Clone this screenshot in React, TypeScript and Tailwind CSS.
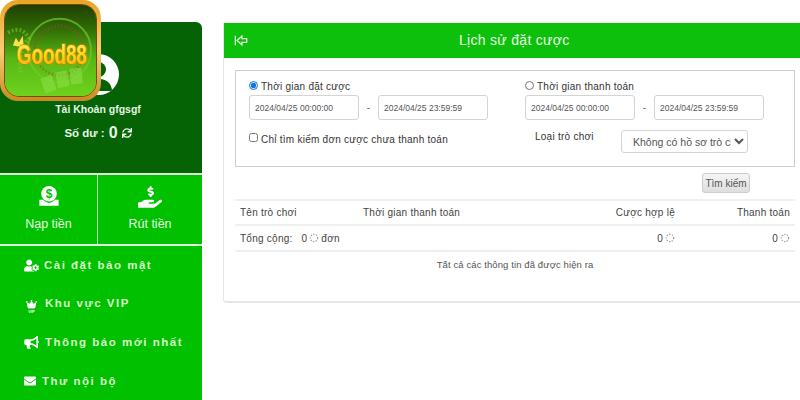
import React from 'react';
import { FaBullhorn, FaEnvelope, FaHandHoldingUsd, FaSync, FaUserCog } from 'react-icons/fa';
import { FaCrown } from 'react-icons/fa6';

const Spinner: React.FC = () => (
  <svg viewBox="0 0 12 12" className="w-[10px] h-[10px] inline-block">
    <circle cx="6" cy="6" r="4.4" fill="none" stroke="#9a9a9a" strokeWidth="1.4" strokeDasharray="1.6 1.6" />
  </svg>
);

const Logo: React.FC = () => (
  <div className="absolute left-0 top-0 w-[101px] h-[101px] rounded-[18px] bg-gradient-to-b from-[#e9a423] via-[#f8cf6f] to-[#c98a1c] p-[4px]">
    <div className="w-full h-full rounded-[15px] overflow-hidden border border-[#7a4a08]">
      <svg viewBox="0 0 92 92" className="w-full h-full block">
        <defs>
          <linearGradient id="logoBg" x1="0" y1="0" x2="0" y2="1">
            <stop offset="0" stopColor="#1f3f02" />
            <stop offset="0.25" stopColor="#2f6a05" />
            <stop offset="0.6" stopColor="#58b814" />
            <stop offset="1" stopColor="#6fd21e" />
          </linearGradient>
          <linearGradient id="logoText" x1="0" y1="0" x2="0" y2="1">
            <stop offset="0" stopColor="#fff26a" />
            <stop offset="0.55" stopColor="#ffd314" />
            <stop offset="1" stopColor="#ff9d0a" />
          </linearGradient>
        </defs>
        <rect width="92" height="92" fill="url(#logoBg)" />
        <circle cx="55" cy="46" r="32" fill="none" stroke="#78c82c" strokeWidth="2" opacity="0.7" />
        <circle cx="55" cy="46" r="25" fill="none" stroke="#a04c2c" strokeWidth="3" strokeDasharray="1.5 2" opacity="0.5" />
        <path d="M3 28 Q18 20 24 34 Q12 46 16 70" fill="none" stroke="#79cf35" strokeWidth="4" strokeDasharray="2 2" opacity="0.55" />
        <g fill="#8fe04a" opacity="0.55">
          <rect x="38" y="72" width="12" height="16" rx="1" transform="rotate(-20 44 80)" />
          <rect x="52" y="67" width="12" height="16" rx="1" transform="rotate(-12 58 75)" />
          <rect x="66" y="64" width="12" height="16" rx="1" transform="rotate(-6 72 72)" />
        </g>
        <path d="M8 41 L11 33 L14 38 L18 31 L19 43 Z" fill="#ffe14a" />
        <text transform="translate(12 60) scale(1 1.45)" fontFamily="'Liberation Sans', sans-serif" fontWeight="700" fontSize="19" fill="url(#logoText)" stroke="#d87c00" strokeWidth="1.1" paintOrder="stroke">Good88</text>
      </svg>
    </div>
  </div>
);

const Sidebar: React.FC = () => (
  <aside className="w-[202px] shrink-0 mt-[22px]">
    <div className="h-[151px] bg-[#056305] rounded-t-[6px] flex flex-col items-center">
      <div className="mt-[32px] mr-[6px] w-[41px] h-[41px] rounded-full bg-white overflow-hidden flex flex-col items-center pt-[8px]">
        <div className="w-[15px] h-[15px] rounded-full bg-[#056305]" />
        <div className="mt-[2px] w-[28px] h-[12px] rounded-t-full bg-[#056305]" />
      </div>
      <p className="mt-[7px] mr-[6px] text-[10.5px] leading-[14px] font-bold text-[#e4f3e4]">Tài Khoản gfgsgf</p>
      <p className="mt-[7px] mr-[6px] flex items-center gap-[4px] text-[11.5px] leading-[20px] font-bold text-[#e8f5e8]">
        Số dư : <span className="text-[16px]">0</span>
        <FaSync className="w-[10px] h-[10px]" />
      </p>
    </div>
    <div className="h-[2px] bg-[#dff3df]" />
    <div className="h-[69px] bg-[#00c000] flex text-[#e6fbe0] text-[12.5px]">
      <div className="w-[98px] flex flex-col items-center pt-[10px] border-r border-[#bfeebf]">
        <svg viewBox="0 0 24 24" className="w-[22px] h-[22px] fill-white">
          <circle cx="12" cy="9.5" r="8.5" />
          <path d="M1.5 16 H5.5 Q12 23 18.5 16 H22.5 V22.5 H1.5 Z" />
          <text x="12" y="14" textAnchor="middle" fontSize="13" fontWeight="700" fontFamily="'Liberation Sans', sans-serif" fill="#00c000">$</text>
        </svg>
        <span className="mt-[8px] leading-[18px]">Nạp tiền</span>
      </div>
      <div className="flex-1 flex flex-col items-center pt-[10px]">
        <FaHandHoldingUsd className="w-[24px] h-[24px] text-white" />
        <span className="mt-[6px] leading-[18px]">Rút tiền</span>
      </div>
    </div>
    <div className="h-[2px] bg-[#dff3df]" />
    <nav className="h-[160px] bg-[#00c000] pl-[24px] pt-[11px] text-[11.5px] font-bold tracking-[1.5px] text-[#d8f7c8]">
      <div className="h-[38px] flex items-start gap-[5px]">
        <FaUserCog className="w-[15px] h-[13px] text-white mt-[2px]" />
        <span className="leading-[17px]">Cài đặt bảo mật</span>
      </div>
      <div className="h-[39px] flex items-start gap-[6px]">
        <span className="w-[15px] flex flex-col items-center mt-[4px] text-white">
          <FaCrown className="w-[15px] h-[10px]" />
          <span className="text-[4px] leading-[5px] tracking-normal">VIP</span>
        </span>
        <span className="leading-[17px]">Khu vực VIP</span>
      </div>
      <div className="h-[39px] flex items-start gap-[6px]">
        <FaBullhorn className="w-[15px] h-[13px] text-white mt-[2px]" />
        <span className="leading-[17px]">Thông báo mới nhất</span>
      </div>
      <div className="h-[39px] flex items-start gap-[6px]">
        <FaEnvelope className="w-[12px] h-[12px] text-white mt-[2px]" />
        <span className="leading-[17px]">Thư nội bộ</span>
      </div>
    </nav>
  </aside>
);

const DateRange: React.FC = () => (
  <div className="flex items-center">
    <input readOnly value="2024/04/25 00:00:00" className="w-[110px] h-[25px] px-[5px] bg-white border border-[#d4d4d4] rounded-[3px] text-[8.5px] tracking-normal font-normal text-[#555]" />
    <span className="w-[19px] text-center text-[10px] text-[#666]">-</span>
    <input readOnly value="2024/04/25 23:59:59" className="w-[110px] h-[25px] px-[5px] bg-white border border-[#d4d4d4] rounded-[3px] text-[8.5px] tracking-normal font-normal text-[#555]" />
  </div>
);

const FilterBox: React.FC = () => (
  <div className="h-[97px] border border-[#cfcfcf] flex pl-[13px] pt-[8px] text-[10px] tracking-[0.25px] font-medium text-[#333]">
    <div className="w-[276px]">
      <label className="h-[15px] flex items-center gap-[3px]">
        <input type="radio" name="timeType" defaultChecked className="w-[9px] h-[9px] m-0 -mt-[3px] accent-[#0b76e0]" />
        <span>Thời gian đặt cược</span>
      </label>
      <div className="mt-[1px]">
        <DateRange />
      </div>
      <label className="mt-[12px] h-[14px] flex items-center gap-[3px]">
        <input type="checkbox" className="w-[9px] h-[9px] m-0 -mt-[3px]" />
        <span>Chỉ tìm kiếm đơn cược chưa thanh toán</span>
      </label>
    </div>
    <div>
      <label className="h-[15px] flex items-center gap-[3px]">
        <input type="radio" name="timeType" className="w-[9px] h-[9px] m-0 -mt-[3px] accent-[#0b76e0]" />
        <span>Thời gian thanh toán</span>
      </label>
      <div className="mt-[1px]">
        <DateRange />
      </div>
      <div className="mt-[10px] flex items-start">
        <span className="ml-[10px] w-[86px] leading-[14px]">Loại trò chơi</span>
        <select className="w-[127px] h-[23px] pl-[7px] bg-white border border-[#d4d4d4] rounded-[3px] text-[10.5px] font-normal tracking-normal text-[#555]">
          <option>Không có hồ sơ trò chơi</option>
        </select>
      </div>
    </div>
  </div>
);

const ResultTable: React.FC = () => (
  <div className="text-[10px] tracking-[0.25px] text-[#444]">
    <div className="h-[27px] flex items-center border-t-2 border-b-2 border-[#f0f0f0] px-[5px] font-medium">
      <span className="w-[123px]">Tên trò chơi</span>
      <span className="flex-1">Thời gian thanh toán</span>
      <span className="w-[115px] text-right">Cược hợp lệ</span>
      <span className="w-[115px] text-right">Thanh toán</span>
    </div>
    <div className="h-[26px] flex items-center border-b-2 border-[#f0f0f0] px-[5px] font-medium">
      <span className="flex-1 flex items-center gap-[2px]">
        Tổng cộng:
        <span className="ml-[7px]">0</span>
        <Spinner />
        <span>đơn</span>
      </span>
      <span className="w-[115px] flex items-center justify-end gap-[2px]">0 <Spinner /></span>
      <span className="w-[115px] flex items-center justify-end gap-[2px]">0 <Spinner /></span>
    </div>
    <p className="mt-[5px] text-center text-[9.5px] tracking-[0.1px] leading-[16px] text-[#555]">Tất cả các thông tin đã được hiện ra</p>
  </div>
);

const App: React.FC = () => (
  <div className="relative w-[800px] h-[400px] overflow-hidden bg-white flex font-['Liberation_Sans',Arial,sans-serif]">
    <Sidebar />
    <main className="ml-[21px] mt-[23px] w-[590px] h-[280px] shrink-0 border-b-2 border-l border-[#e6e6e6] rounded-b-[4px]">
      <header className="h-[35px] bg-[#0cc00c] flex items-center text-white">
        <svg viewBox="0 0 16 14" className="ml-[10px] w-[14px] h-[13px]" fill="none" stroke="#eafbe6" strokeWidth="1.4">
          <path d="M1.5 1.5 V12.5 M3.5 7 L9 2 V4.8 H14.5 V9.2 H9 V12 Z" />
        </svg>
        <h1 className="ml-[211px] text-[14px] tracking-[0.3px] text-[#e9fbe4]">Lịch sử đặt cược</h1>
      </header>
      <div className="w-[560px] ml-[11px] mt-[12px]">
        <FilterBox />
        <div className="h-[32px] flex justify-end items-start pt-[6px] pr-[45px]">
          <button className="w-[48px] h-[20px] rounded-[3px] border border-[#ccc] bg-gradient-to-b from-[#f5f5f5] to-[#dedede] text-[10px] text-[#555]">Tìm kiếm</button>
        </div>
        <ResultTable />
      </div>
    </main>
    <Logo />
  </div>
);

export default App;
